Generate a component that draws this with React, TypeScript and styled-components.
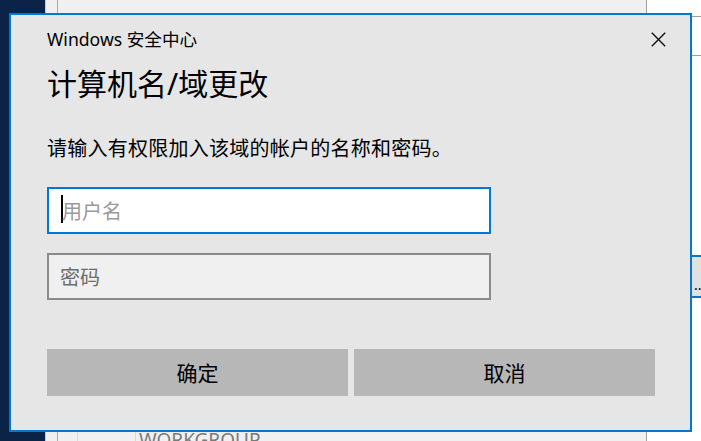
import React from "react";
import styled, { createGlobalStyle } from "styled-components";

const GlobalStyle = createGlobalStyle`
  html, body {
    margin: 0;
    padding: 0;
    width: 701px;
    height: 441px;
    overflow: hidden;
    background: #f0f0f0;
  }
  * { box-sizing: border-box; }
`;

const FONT = `"Noto Sans", "Noto Sans CJK SC", sans-serif`;

const Scene = styled.div`
  position: relative;
  display: flex;
  width: 701px;
  height: 441px;
  overflow: hidden;
  font-family: ${FONT};
`;

const Desktop = styled.div`
  width: 45px;
  flex: none;
  background: #0a2346;
`;

const BackWindow = styled.div`
  flex: 1;
  display: flex;
  background: #f0f0f0;
`;

const MainPane = styled.div`
  width: 602px;
  flex: none;
  display: flex;
  flex-direction: column;
  padding-left: 11px;
  border-left: 1px solid #c8ccd2;
  border-right: 1px solid #a0a0a0;
`;

const PaneColumn = styled.div`
  flex: 1;
  display: flex;
  flex-direction: column;
  justify-content: flex-end;
  border-left: 1px solid #a9a9a9;
`;

const TableRow = styled.div`
  height: 20px;
  display: flex;
  overflow: hidden;
`;

const Cell = styled.div<{ $w?: number }>`
  width: ${(p) => (p.$w ? `${p.$w}px` : "auto")};
  flex: ${(p) => (p.$w ? "none" : "1")};
  border-right: ${(p) => (p.$w ? "1px solid #d9d9d9" : "none")};
  padding: 7px 0 0 ${(p) => (p.$w ? 0 : 3)}px;
  font-size: 19px;
  line-height: 24px;
  color: #7a7a7a;
  white-space: nowrap;
`;

const RightPane = styled.div`
  flex: 1;
  display: flex;
  flex-direction: column;
  background: #ffffff;
`;

const Rule = styled.div<{ $top: number }>`
  height: 1px;
  flex: none;
  margin-top: ${(p) => p.$top}px;
  background: #a0a0a0;
`;

const MoreButton = styled.div`
  margin-top: 199px;
  height: 43px;
  flex: none;
  border: 2px solid #0078d7;
  background: #e1e1e1;
  padding: 8px 0 0 45px;
  font-size: 14px;
  line-height: 39px;
  color: #000;
  white-space: nowrap;
  overflow: hidden;
`;

const Dialog = styled.div`
  position: absolute;
  left: 9px;
  top: 13px;
  width: 683px;
  height: 419px;
  border: 2px solid #0078d7;
  background: #e6e6e6;
  display: flex;
  flex-direction: column;
`;

const Header = styled.div`
  display: flex;
  align-items: center;
  justify-content: space-between;
  padding: 13px 24px 0 36px;
  height: 35px;
`;

const Caption = styled.div`
  font-size: 17.6px;
  line-height: 22px;
  color: #000;
`;

const CloseButton = styled.button`
  border: 0;
  padding: 0;
  margin: 0;
  background: transparent;
  width: 15px;
  height: 15px;
  display: flex;
  cursor: pointer;
  margin-top: 1px;
`;

const Body = styled.div`
  display: flex;
  flex-direction: column;
  padding: 0 35px 0 36px;
`;

const Heading = styled.h1`
  margin: 14px 0 0;
  font-size: 30px;
  font-weight: 400;
  line-height: 40px;
  color: #000;
`;

const Prompt = styled.p`
  margin: 31px 0 0;
  font-size: 20px;
  letter-spacing: 0.25px;
  line-height: 28px;
  color: #000;
`;

const Field = styled.div<{ $active?: boolean; $gap: number }>`
  margin-top: ${(p) => p.$gap}px;
  width: 444px;
  height: 47px;
  display: flex;
  align-items: center;
  border: 2px solid ${(p) => (p.$active ? "#0078d7" : "#8a8a8a")};
  background: ${(p) => (p.$active ? "#ffffff" : "#f0f0f0")};
  padding: ${(p) => (p.$active ? "3px 0 0 12px" : "3px 0 0 11px")};
`;

const Caret = styled.span`
  width: 2px;
  height: 28px;
  margin-top: -6px;
  margin-right: -1px;
  background: #000;
  flex: none;
`;

const Placeholder = styled.span<{ $dim?: boolean }>`
  font-size: 20px;
  line-height: 28px;
  color: ${(p) => (p.$dim ? "#9a9a9a" : "#6d6d6d")};
`;

const Actions = styled.div`
  margin-top: 49px;
  display: grid;
  grid-template-columns: 1fr 1fr;
  gap: 6px;
`;

const ActionButton = styled.button`
  height: 47px;
  border: 0;
  margin: 0;
  padding: 0;
  background: #b7b7b7;
  font-family: ${FONT};
  font-size: 21px;
  line-height: 28px;
  color: #000;
  cursor: pointer;
`;

const CloseIcon = () => (
  <svg width="15" height="15" viewBox="0 0 15 15" aria-hidden="true">
    <path d="M0.8 0.8 L14.2 14.2 M14.2 0.8 L0.8 14.2" stroke="#111" strokeWidth="1.4" fill="none" />
  </svg>
);

export default function App() {
  return (
    <>
      <GlobalStyle />
      <Scene>
        <Desktop />
        <BackWindow>
          <MainPane>
            <PaneColumn>
              <TableRow>
                <Cell $w={20} />
                <Cell $w={58} />
                <Cell>WORKGROUP</Cell>
              </TableRow>
            </PaneColumn>
          </MainPane>
          <RightPane>
            <Rule $top={16} />
            <Rule $top={38} />
            <MoreButton>...</MoreButton>
          </RightPane>
        </BackWindow>
        <Dialog role="dialog">
          <Header>
            <Caption>Windows 安全中心</Caption>
            <CloseButton aria-label="关闭">
              <CloseIcon />
            </CloseButton>
          </Header>
          <Body>
            <Heading>计算机名/域更改</Heading>
            <Prompt>请输入有权限加入该域的帐户的名称和密码。</Prompt>
            <Field $active $gap={24}>
              <Caret />
              <Placeholder $dim>用户名</Placeholder>
            </Field>
            <Field $gap={19}>
              <Placeholder>密码</Placeholder>
            </Field>
            <Actions>
              <ActionButton>确定</ActionButton>
              <ActionButton>取消</ActionButton>
            </Actions>
          </Body>
        </Dialog>
      </Scene>
    </>
  );
}
